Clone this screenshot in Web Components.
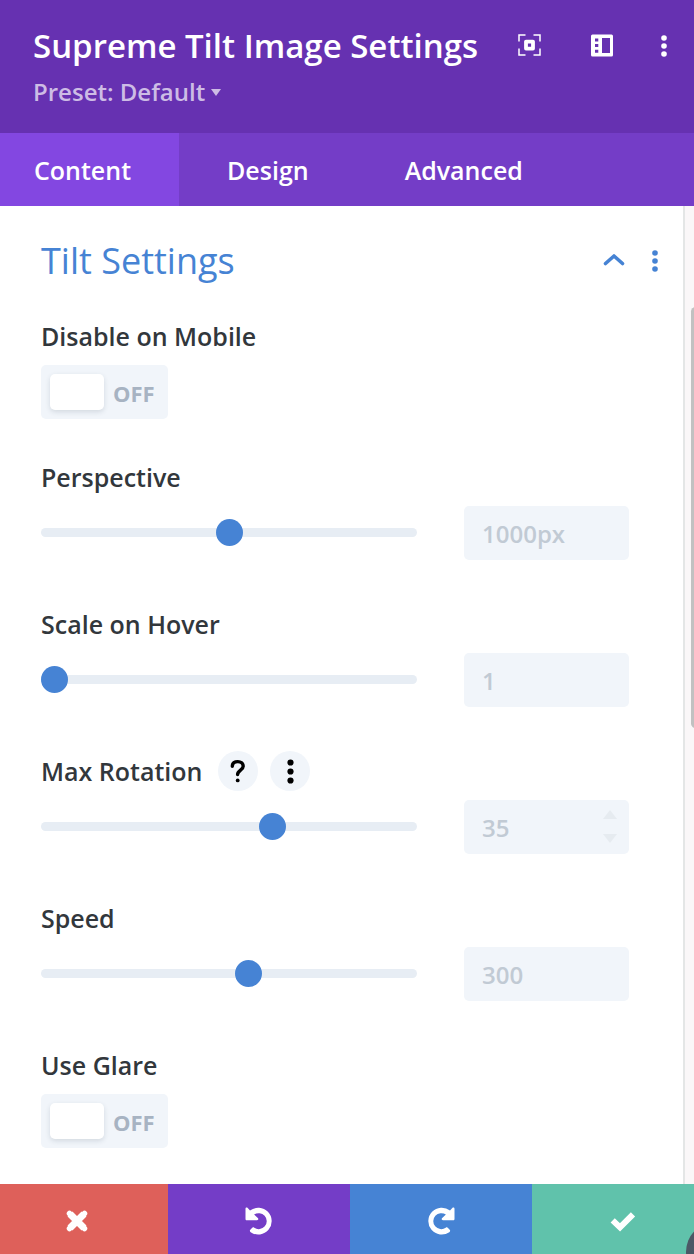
<!DOCTYPE html>
<html lang="en">
<head>
<meta charset="utf-8">
<meta name="viewport" content="width=device-width, initial-scale=1">
<title>Supreme Tilt Image Settings</title>
<style>
  html, body { margin: 0; min-height: 100%; }
  body {
    font-family: "Open Sans", "Noto Sans", sans-serif;
    font-weight: 600;
    font-size: 25px;
    line-height: 30px;
    color: #32373c;
    background: #fff;
    --blue: #4683d4;
    --field: #f1f5fa;
    --violet: #743dc7;
  }
</style>
</head>
<body>
<settings-modal>
  <modal-header slot="header" heading="Supreme Tilt Image Settings" preset="Preset: Default"></modal-header>
  <tab-bar slot="tabs" tabs="Content,Design,Advanced"></tab-bar>
  <settings-section heading="Tilt Settings">
    <toggle-field label="Disable on Mobile"></toggle-field>
    <range-field label="Perspective" value="50" hint="1000px"></range-field>
    <range-field label="Scale on Hover" value="0" hint="1"></range-field>
    <range-field label="Max Rotation" value="62.5" hint="35" active></range-field>
    <range-field label="Speed" value="55.5" hint="300"></range-field>
    <toggle-field label="Use Glare"></toggle-field>
  </settings-section>
  <action-bar slot="footer"></action-bar>
</settings-modal>

<script>
const reset = `
  :host, * { box-sizing: border-box; }
  button { font: inherit; color: inherit; background: none; border: 0; margin: 0; padding: 0; cursor: pointer; }
  svg { display: block; }
`;

const dots = `<svg width="8" height="24" viewBox="0 0 8 24" fill="currentColor" aria-hidden="true">
  <circle cx="4" cy="4" r="2.8"/><circle cx="4" cy="12" r="2.8"/><circle cx="4" cy="20" r="2.8"/></svg>`;

class BaseElement extends HTMLElement {
  connectedCallback() {
    if (this.shadowRoot) return;
    this.attachShadow({ mode: 'open' }).innerHTML = `<style>${reset}</style>` + this.render();
  }
  attr(name) { return this.getAttribute(name) || ''; }
}

customElements.define('settings-modal', class extends BaseElement {
  render() {
    return `<style>
      :host { display: flex; flex-direction: column; min-height: 100vh; position: relative; overflow: hidden; }
      .body { flex: 1; display: grid; grid-template-columns: minmax(0, 1fr) 11px; }
      .gutter { background: #faf7f8; border-left: 2px solid #e4e6e6; padding: 101px 0 0 6px; }
      .thumb { height: 421px; margin-right: -6px; background: #c1c1c1; border-radius: 8px; }
      .bubble { position: absolute; right: -52px; bottom: -28px; width: 60px; height: 60px; border-radius: 50%; background: #4c5866; }
    </style>
    <slot name="header"></slot>
    <slot name="tabs"></slot>
    <div class="body"><slot></slot><div class="gutter"><div class="thumb"></div></div></div>
    <slot name="footer"></slot>
    <div class="bubble"></div>`;
  }
});

customElements.define('modal-header', class extends BaseElement {
  render() {
    return `<style>
      :host { display: flex; justify-content: space-between; background: #6631b1; color: #fff; height: 133px; padding: 24px 26px 0 33px; }
      h1 { margin: 0 0 8px; font-size: 33px; line-height: 44px; font-weight: 600; white-space: nowrap; }
      .preset { display: flex; align-items: center; gap: 6px; font-size: 24px; line-height: 32px; color: #cdbce5; }
      nav { display: flex; align-items: center; height: 44px; }
      nav button + button { margin-left: 49px; }
      nav button:last-child { margin-left: 46px; }
    </style>
    <div>
      <h1>${this.attr('heading')}</h1>
      <button class="preset">${this.attr('preset')}
        <svg width="10" height="8" viewBox="0 0 10 8" fill="currentColor" aria-hidden="true"><path d="M0 1h10L5 8z"/></svg>
      </button>
    </div>
    <nav>
      <button aria-label="Expand"><svg width="24" height="24" viewBox="0 0 24 24" fill="none" stroke="#fff" aria-hidden="true">
        <path stroke-width="1.500" d="M2 7.500V1h6.500M16.500 1H23v6.500M23 14.500V21h-6.500M8.500 21H2v-6.500"/>
        <rect x="9" y="7.600" width="7" height="7" stroke-width="3.800" stroke-linejoin="round"/></svg></button>
      <button aria-label="Dock"><svg width="24" height="24" viewBox="0 0 24 24" aria-hidden="true">
        <path fill="#fff" fill-rule="evenodd" d="M2.500.500h19a1.500 1.500 0 0 1 1.500 1.500v19a1.500 1.500 0 0 1-1.500 1.500h-19A1.500 1.500 0 0 1 1 21V2A1.500 1.500 0 0 1 2.500.500zM12 4v15h8V4zM5 4.500v3h3.300v-3zM5 10v3h3.300v-3zM5 15.800v3h3.300v-3z"/></svg></button>
      <button aria-label="More options">${dots}</button>
    </nav>`;
  }
});

customElements.define('tab-bar', class extends BaseElement {
  render() {
    const tabs = this.attr('tabs').split(',');
    return `<style>
      :host { display: block; background: var(--violet); color: #fff; }
      [role=tablist] { display: flex; height: 73px; }
      button { padding: 0 48px; }
      button:first-child { padding-left: 34px; }
      button[aria-selected=true] { background: #8347e1; }
    </style><div role="tablist">` +
      tabs.map((t, i) => `<button role="tab" aria-selected="${i === 0}">${t}</button>`).join('') + `</div>`;
  }
});

customElements.define('settings-section', class extends BaseElement {
  render() {
    return `<style>
      :host { display: block; padding: 30px 24px 36px 41px; }
      header { display: flex; align-items: center; height: 50px; margin-bottom: 35px; color: var(--blue); }
      h2 { flex: 1; margin: 0; font-size: 36px; font-weight: 400; line-height: 50px; }
      header button + button { margin-left: 26px; }
      .fields { margin-right: 30px; }
    </style>
    <header><h2>${this.attr('heading')}</h2>
      <button aria-label="Collapse"><svg width="22" height="14" viewBox="0 1 22 14" fill="none" stroke="currentColor" stroke-width="3.600" stroke-linecap="round" stroke-linejoin="round" aria-hidden="true"><path d="M2.500 10.500L11 3l8.500 7.500"/></svg></button>
      <button aria-label="Section options">${dots}</button>
    </header>
    <div class="fields"><slot></slot></div>`;
  }
});

customElements.define('toggle-field', class extends BaseElement {
  render() {
    return `<style>
      :host { display: block; }
      :host(:not(:last-child)) { margin-bottom: 43px; }
      .label { display: block; margin-bottom: 14px; }
      .switch { display: flex; align-items: center; gap: 9px; width: 127px; height: 54px; padding: 0 9px; border-radius: 5px; background: var(--field); color: #a7b3c2; font-size: 22px; font-weight: 700; }
      input { appearance: none; width: 54px; height: 36px; margin: 0; border-radius: 5px; background: #fff; box-shadow: 0 2px 5px rgba(43, 60, 80, .15); }
      .switch span { padding-top: 2px; }
    </style>
    <label class="label" for="toggle">${this.attr('label')}</label>
    <div class="switch"><input id="toggle" type="checkbox" role="switch"><span>OFF</span></div>`;
  }
});

customElements.define('range-field', class extends BaseElement {
  render() {
    const active = this.hasAttribute('active');
    return `<style>
      :host { display: block; margin-bottom: 49px; }
      .top { display: flex; align-items: center; height: 30px; margin-bottom: 14px; }
      .top button { display: grid; place-items: center; width: 40px; height: 40px; border-radius: 50%; background: var(--field); color: #000; margin-left: 12px; }
      .top label + button { margin-left: 16px; }
      .row { display: flex; align-items: center; gap: 47px; }
      input[type=range] { appearance: none; flex: 1; min-width: 0; height: 27px; margin: 0 0 2px; background: none; }
      input[type=range]::-webkit-slider-runnable-track { height: 9px; border-radius: 5px; background: #e7edf4; }
      input[type=range]::-webkit-slider-thumb { appearance: none; width: 27px; height: 27px; margin-top: -9px; border: 0; border-radius: 50%; background: var(--blue); }
      .box { position: relative; width: 165px; }
      .box input { display: block; width: 100%; height: 54px; border: 0; border-radius: 5px; padding: 1px 18px 0; background: var(--field); font: inherit; font-size: 24px; color: #4c5866; }
      .box input::placeholder { color: #c1cad4; opacity: 1; }
      .steps { position: absolute; right: 12px; top: 10px; display: grid; gap: 15px; color: #e6ebf0; }
    </style>
    <div class="top"><label for="range">${this.attr('label')}</label>${active ? `
      <button aria-label="Help"><svg width="16" height="24" viewBox="0 0 16 24" aria-hidden="true"><path d="M2.300 7.200C2.300 4 4.700 2.600 7.800 2.600s5.400 1.700 5.400 4.600c0 3.800-5.600 4-5.600 8.400" fill="none" stroke="#000" stroke-width="3.400" stroke-linecap="round"/><circle cx="7.700" cy="21.400" r="1.900"/></svg></button>
      <button aria-label="Field options"><svg width="8" height="26" viewBox="0 0 8 26" aria-hidden="true"><circle cx="4.500" cy="4.500" r="3.100"/><circle cx="4.500" cy="13.500" r="3.100"/><circle cx="4.500" cy="22.500" r="3.100"/></svg></button>` : ''}
    </div>
    <div class="row">
      <input id="range" type="range" min="0" max="100" step="0.5" value="${this.attr('value')}">
      <div class="box"><input type="text" aria-label="${this.attr('label')} value" placeholder="${this.attr('hint')}">${active ? `
        <div class="steps">
          <button aria-label="Increase"><svg width="14" height="9" viewBox="0 0 14 9" fill="currentColor"><path d="M0 9h14L7 0z"/></svg></button>
          <button aria-label="Decrease"><svg width="14" height="9" viewBox="0 0 14 9" fill="currentColor"><path d="M0 0h14L7 9z"/></svg></button>
        </div>` : ''}</div>
    </div>`;
  }
});

customElements.define('action-bar', class extends BaseElement {
  render() {
    const arrow = `<svg width="28" height="28" viewBox="2.500 0 28 28" aria-hidden="true"><path fill="#fff" d="M3 2c0-1.400 1.200-1.800 2.200-.9L7.500 3.600A13.400 13.400 0 1 1 8.200 25.200c-1-.8-1.100-1.700-.4-2.500l1.700-1.800c.7-.7 1.500-.7 2.300-.1A8 8 0 1 0 11.600 7.600l3.700 3.300c1 1 .5 2.300-.8 2.300H4.300C3.500 13.200 3 12.700 3 11.900z"/></svg>`;
    return `<style>
      :host { display: block; overflow: hidden; }
      .bar { display: grid; grid-template-columns: repeat(4, 1fr); height: 70px; margin: 0 -20px 0 -14px; }
      button { display: grid; place-items: center; padding-top: 3px; }
      .cancel { background: #de605a; }
      .undo { background: var(--violet); }
      .redo { background: var(--blue); }
      .save { background: #60c2ab; }
      .redo svg { transform: scaleX(-1); }
    </style>
    <div class="bar">
      <button class="cancel" aria-label="Discard changes"><svg width="24" height="24" viewBox="0 0 24 24" aria-hidden="true"><path d="M5 5l14 14M19 5L5 19" stroke="#fff" stroke-width="7"/><path d="M4.500 4.500l15 15M19.500 4.500l-15 15" stroke="#fff" stroke-width="5.500" stroke-linecap="round"/></svg></button>
      <button class="undo" aria-label="Undo">${arrow}</button>
      <button class="redo" aria-label="Redo">${arrow}</button>
      <button class="save" aria-label="Save changes"><svg width="28" height="22" viewBox="0 0 28 22" aria-hidden="true"><path d="M3.700 10.300l7.300 7L24 4.300" fill="none" stroke="#fff" stroke-width="6" stroke-linejoin="miter"/></svg></button>
    </div>`;
  }
});
</script>
</body>
</html>
